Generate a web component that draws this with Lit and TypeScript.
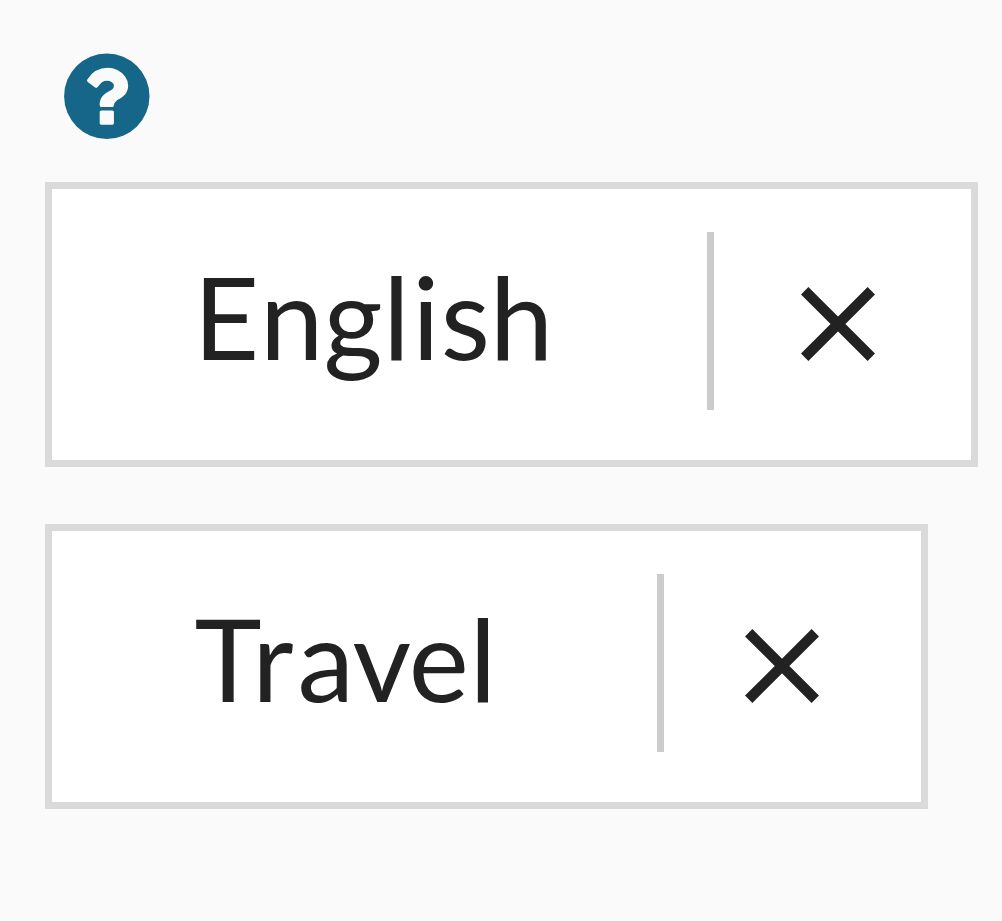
import { LitElement, html, css } from "lit";
import { customElement, property } from "lit/decorators.js";

@customElement("filter-tag")
class FilterTag extends LitElement {
  @property() label = "";
  // Horizontal origin of every letter of the label, measured from the inner edge.
  @property() positions = "";

  static styles = css`
    :host {
      display: flex;
      box-sizing: border-box;
      height: 285px;
      border: 7px solid #dadada;
      background: #fff;
      align-items: center;
    }
    .label {
      flex: 1;
      min-width: 0;
      height: 271px;
      font: 400 113.78px Lato, sans-serif;
      fill: #222;
    }
    .remove {
      display: flex;
      box-sizing: border-box;
      width: 264px;
      height: 178px;
      padding: 0 0 0 var(--cross-inset);
      margin: 0 0 8px;
      border: 0;
      border-left: 7px solid #ccc;
      background: none;
      align-items: center;
    }
    .cross {
      display: block;
      margin-top: 6px;
    }
  `;

  render() {
    return html`
      <svg class="label"><text x=${this.positions} y="171">${this.label}</text></svg>
      <button class="remove" aria-label="Remove">
        <svg class="cross" width="74" height="74" viewBox="0 0 74 74">
          <path d="M3.7 3.7 70.3 70.3M70.3 3.7 3.7 70.3" fill="none" stroke="#222" stroke-width="10.4" />
        </svg>
      </button>
    `;
  }
}

@customElement("app-root")
class AppRoot extends LitElement {
  static styles = css`
    :host {
      display: flex;
      flex-direction: column;
      align-items: flex-start;
      box-sizing: border-box;
      width: 100%;
      height: 100vh;
      padding: 53px 0 0 45px;
      background: #fafafa;
      overflow: hidden;
    }
    .help {
      display: block;
      margin: 0 0 43px 19px;
    }
    .english {
      width: 933px;
      margin-bottom: 57px;
      --cross-inset: 87px;
    }
    .travel {
      width: 883px;
      --cross-inset: 81px;
    }
  `;

  render() {
    return html`
      <svg class="help" width="86" height="86" viewBox="0 0 86 86">
        <g transform="translate(0.1 0.5) scale(0.0556) translate(-128 -128)">
          <circle cx="896" cy="896" r="768" fill="#156688" />
          <path
            fill="#fafafa"
            d="M1024 1376v-192q0-14-9-23t-23-9h-192q-14 0-23 9t-9 23v192q0 14 9 23t23 9h192q14 0 23-9t9-23zM1280 704q0-88-55.5-163t-138.5-116-170-41q-243 0-371 213-15 24 8 42l132 100q7 6 19 6 16 0 25-12 53-68 86-92 34-24 86-24 48 0 85.5 26t37.5 59q0 38-20 61t-68 45q-63 28-115.5 86.5t-52.5 125.5v36q0 14 9 23t23 9h192q14 0 23-9t9-23q0-19 21.5-49.5t54.5-49.5q32-18 49-28.5t46-35 44.5-48 28-60.5 12.5-81z"
          />
        </g>
      </svg>
      <filter-tag
        class="english"
        label="English"
        positions="141.5 208.1 271.5 331.1 360.2 388.7 437.7"
      ></filter-tag>
      <filter-tag
        class="travel"
        label="Travel"
        positions="142.6 200.2 245.4 300.6 356.7 417.5"
      ></filter-tag>
    `;
  }
}
